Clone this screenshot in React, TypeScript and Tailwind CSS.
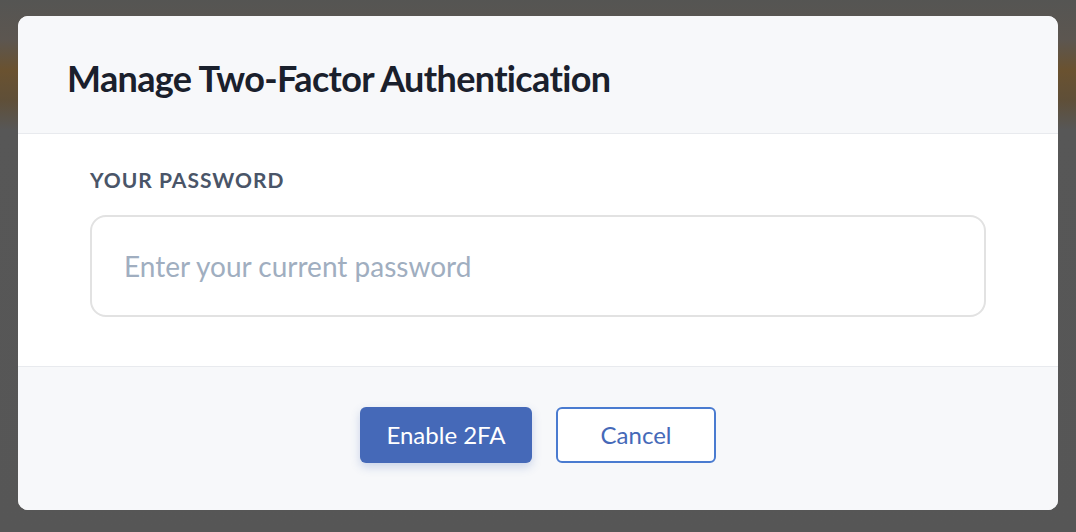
export default function App() {
  return (
    <div
      className="h-[532px] w-full px-[18px] pt-[16px] bg-[linear-gradient(180deg,#555553_0px,#5c5650_40px,#6a5230_70px,#5f4f38_100px,#575757_130px,#565656_532px)]"
      style={{ fontFamily: "Lato, 'Noto Sans', sans-serif" }}
    >
      <div className="flex h-[494px] w-[1040px] flex-col overflow-hidden rounded-[10px] bg-white">
        <div className="h-[118px] shrink-0 border-b border-[#e8eaee] bg-[#f7f8fa] pl-[49px] pt-[40px]">
          <h2 className="text-[36px] font-bold leading-[44px] tracking-[-0.65px] text-[#1a202c]">
            Manage Two-Factor Authentication
          </h2>
        </div>
        <div className="flex h-[232px] shrink-0 flex-col px-[72px] pt-[32px]">
          <label className="text-[21px] font-bold uppercase leading-[28px] tracking-[1px] text-[#4a5568]">
            Your password
          </label>
          <input
            type="password"
            placeholder="Enter your current password"
            className="mt-[21px] h-[102px] w-[896px] rounded-[16px] border-2 border-[#e2e2e2] px-[32px] text-[28px] text-[#2d3748] outline-none placeholder:text-[#a0aec0]"
          />
        </div>
        <div className="flex flex-1 items-start justify-center gap-[24px] border-t border-[#e8eaee] bg-[#f7f8fa] pt-[40px]">
          <button className="h-[56px] w-[172px] rounded-[6px] bg-[#4569b8] text-[24px] text-white shadow-[0_4px_10px_rgba(69,105,184,0.25)]">
            Enable 2FA
          </button>
          <button className="h-[56px] w-[160px] rounded-[6px] border-2 border-[#4a7bd0] bg-white text-[24px] text-[#4569b8]">
            Cancel
          </button>
        </div>
      </div>
    </div>
  );
}
